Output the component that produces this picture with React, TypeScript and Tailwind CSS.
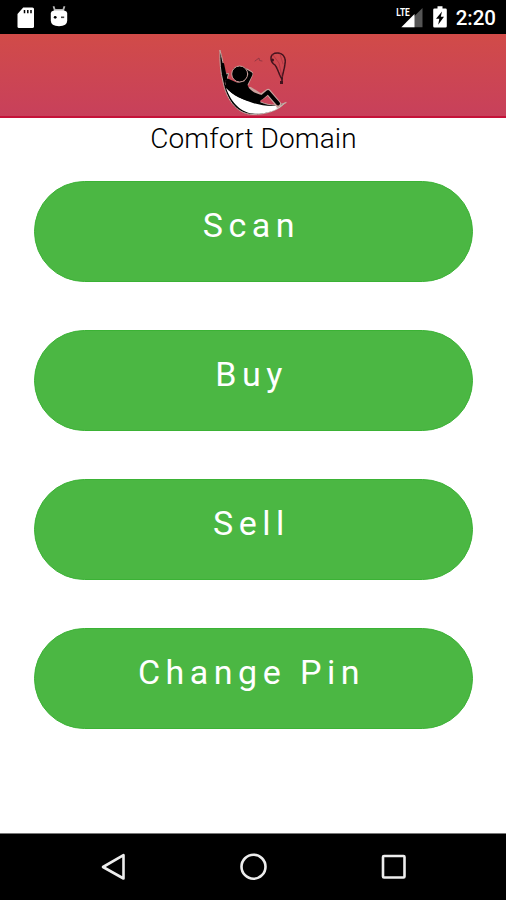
const actions = ['Scan', 'Buy', 'Sell', 'Change Pin'];

function SdCardIcon() {
  return (
    <svg className="mt-px h-[21px] w-[17px]" viewBox="0 0 17 21" fill="none">
      <path d="M6.2 0.4H15.4Q17 .4 17 2V19.4Q17 21 15.4 21H2Q.5 21 .5 19.4V7Z" fill="white" />
      <path d="M7.5 3v3.2M10.8 3v3.2M14 3v3.2" stroke="black" strokeWidth="1.5" />
    </svg>
  );
}

function DebugIcon() {
  return (
    <svg className="h-[21px] w-[18px]" viewBox="0 0 18 21" fill="none">
      <path d="M3.5 0.3L4.8 4H13.2L14.5 .3" stroke="#b5b5b5" strokeWidth="1.8" />
      <path d="M3.8 4.5H14.2Q17.2 5.2 17.2 7V14.5Q17.2 20.2 9 20.2Q.8 20.2 .8 14.5V7Q.8 5.2 3.8 4.5Z" fill="white" />
      <circle cx="5.2" cy="11.3" r="1.4" fill="black" />
      <path d="M11 11.3h3.2" stroke="#444" strokeWidth="1.6" />
    </svg>
  );
}

function SignalIcon() {
  return (
    <svg className="h-[22px] w-[28px]" viewBox="0 0 28 22" fill="none">
      <path d="M26.5 2V21.3H7.2Z" fill="#555" />
      <path d="M18.5 8V21.3H5.3Z" fill="white" />
      <path d="M0 0H14.5V11H0Z" fill="black" />
      <text x="0.3" y="9.8" fill="white" fontFamily="Roboto, sans-serif" fontSize="11.5" fontWeight="700" textLength="13.5" lengthAdjust="spacingAndGlyphs">
        LTE
      </text>
    </svg>
  );
}

function BatteryIcon() {
  return (
    <svg className="h-[22px] w-[14px]" viewBox="0 0 14 22" fill="none">
      <path d="M4.5 0.3h5v2.2h3q1.3 0 1.3 1.3v16.4q0 1.3-1.3 1.3h-11Q.2 21.5 .2 20.2V3.8Q.2 2.5 1.5 2.5h3Z" fill="white" />
      <path d="M9 5.5L3 12.8H6.3L5.2 18.7L11 10.8H7.8Z" fill="black" />
    </svg>
  );
}

function Logo() {
  return (
    <svg className="ml-1 h-[68px] w-[72px]" viewBox="14 9 72 68" fill="none" strokeLinecap="round" strokeLinejoin="round">
      {/* hammock */}
      <path d="M15 10.5C17.5 17 18 26 20.500 34L23.5 33.5L22 40C26 44 31 45 35 47L52 60C62 66 72 66 80 63C73 71 60 74.5 48 74.5C30 74 21 57 18 42C15.5 32 14.5 22 15 10.5Z" fill="black" stroke="#c3aaa4" strokeWidth="1" />
      <path d="M17.800 24L21 39" stroke="black" strokeWidth="2.600" />
      <path d="M21 48C28 55 39 60 48 63C58 66 69 67 78 64.5C72 71 61 73.8 50 73.8C36 73.5 26 62 21 48Z" fill="white" />
      <path d="M72 68L81 62.5" stroke="#c3aaa4" strokeWidth="1.2" />
      {/* reclining figure */}
      <path d="M23 43L33 46L41 43L45 34L41 31.5M45 50L56 57L63 52L73 64" stroke="#c9a19d" strokeWidth="6.2" />
      <path d="M58 62L62.5 56L69 64Z" fill="#c8465a" />
      <path d="M23 41L32 45L41 43L45.5 34L41 31.5" stroke="black" strokeWidth="4.2" />
      <path d="M20 41C27 42 34 45 42 41C42 49 48 53 57 55L55 62.5C42 62 28 57 21 47Z" fill="black" />
      <path d="M49 58L56 58L63 52L73 63.5" stroke="black" strokeWidth="3.8" />
      <circle cx="34.7" cy="34" r="8" fill="black" stroke="#c9a19d" strokeWidth="1" />
      {/* balloon */}
      <path d="M66 18C66 14 70 12.8 73 13C79 13.5 81 19 80 23.5C79.5 29 77.5 34 77 39C74 35 73 29 70 25C67 23 66 21 66 18Z" stroke="#41131d" strokeWidth="1.5" strokeDasharray="2.5 .7" />
      <circle cx="67.5" cy="20" r="1.5" fill="#41131d" />
      <path d="M68 15L74 23L77 37M75 14L78 24" stroke="#a5303f" strokeWidth=".7" />
      <path d="M77 38V41.5" stroke="#30171d" strokeWidth="1.5" />
      <path d="M75 41h3v3h-3Z" fill="#41131d" />
      <path d="M50 21L52 19.5L54 18L54.5 20.5L57 21" stroke="#963744" strokeWidth="1" />
    </svg>
  );
}

function StatusBar() {
  return (
    <div className="flex h-[34px] items-start bg-black pt-1.5 text-white">
      <div className="flex gap-4 pl-[17px]">
        <SdCardIcon />
        <DebugIcon />
      </div>
      <div className="ml-auto flex pr-[10px]">
        <SignalIcon />
        <div className="ml-[9px]">
          <BatteryIcon />
        </div>
        <span className="ml-[9px] text-[20.5px] leading-[24px] font-medium">2:20</span>
      </div>
    </div>
  );
}

function NavigationBar() {
  return (
    <nav className="flex h-[67px] justify-between border-t border-[#777] bg-black pt-[19px] pr-[99px] pl-[101px]">
      <svg className="size-[28px]" viewBox="0 0 28 28" fill="none" stroke="#ededed" strokeWidth="2.6" strokeLinejoin="round">
        <path d="M22.5 2.2V25.5L2 14Z" />
      </svg>
      <svg className="size-[28px]" viewBox="0 0 28 28" fill="none" stroke="#ededed" strokeWidth="2.6">
        <circle cx="13.5" cy="13.7" r="12" />
      </svg>
      <svg className="size-[28px]" viewBox="0 0 28 28" fill="none" stroke="#ededed" strokeWidth="2.6">
        <rect x="4" y="3" width="21.5" height="21.5" rx="1" />
      </svg>
    </nav>
  );
}

export default function App() {
  return (
    <div className="flex h-[900px] w-[506px] flex-col overflow-hidden bg-white font-['Roboto',sans-serif]">
      <StatusBar />
      <header className="flex h-[84px] justify-center border-b-2 border-[#c51239] bg-linear-to-b from-[#d14b48] to-[#c8405b] pt-[15px]">
        <Logo />
      </header>
      <main className="flex flex-1 flex-col">
        <h1 className="h-[62.5px] pt-[5px] pl-px text-center text-[28px] leading-[32px] font-light tracking-[0.08px] text-black">
          Comfort Domain
        </h1>
        <div className="flex flex-col gap-[48px] pr-[33px] pl-[34px]">
          {actions.map((label) => (
            <button
              key={label}
              className="h-[101px] rounded-full border border-[#3bb235] bg-[#4bb743] pr-[4px] pb-[13px] text-[34px] leading-[40px] tracking-[5.5px] text-white"
            >
              {label}
            </button>
          ))}
        </div>
      </main>
      <NavigationBar />
    </div>
  );
}
